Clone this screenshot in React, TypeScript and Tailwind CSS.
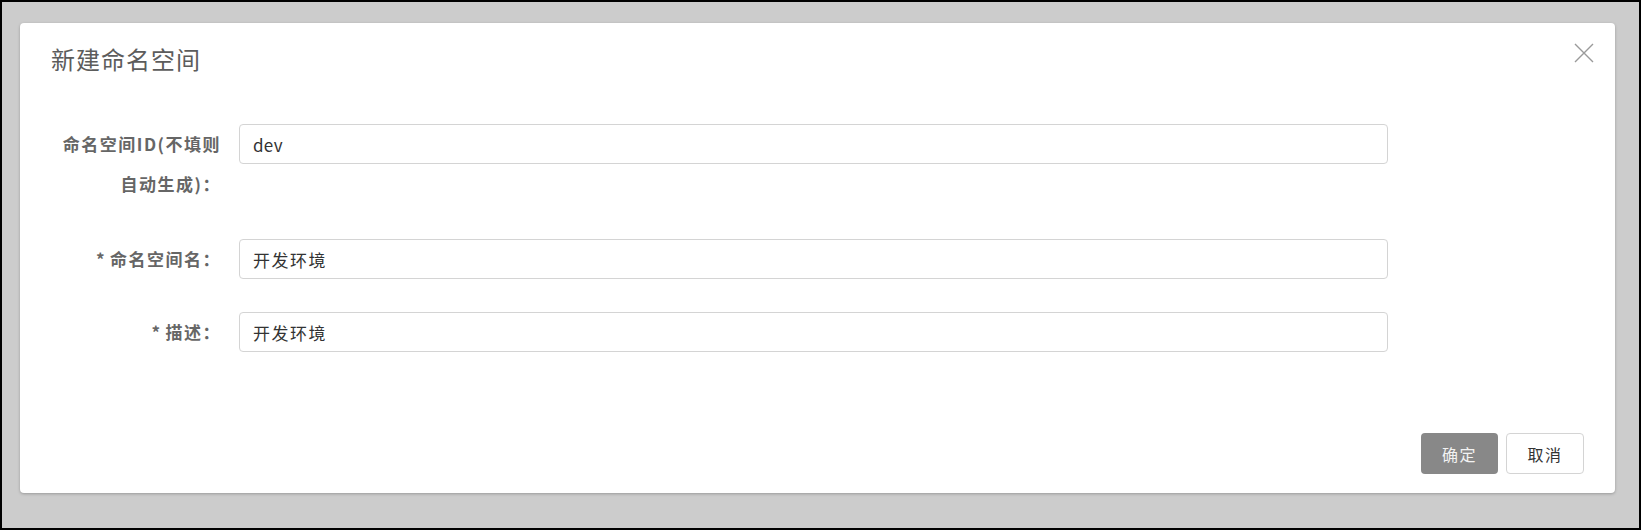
const font = { fontFamily: '"Noto Sans CJK SC", "Noto Sans", sans-serif' };

function Field({ label, value, className = "", latin = false }: { label: React.ReactNode; value: string; className?: string; latin?: boolean }) {
  return (
    <div className={`grid grid-cols-[170px_1149px] gap-x-[18px] items-start ${className}`}>
      <label className="text-right whitespace-nowrap text-[17px] leading-[40px] font-bold text-[#666] tracking-[1.5px]">{label}</label>
      <input
        readOnly
        value={value}
        className={`h-10 w-full rounded border border-[#d4d4d4] bg-white px-[13px] text-[17px] text-[#333] outline-none ${latin ? "tracking-[0.3px]" : "tracking-[1.5px]"}`}
        style={font}
      />
    </div>
  );
}

export default function App() {
  return (
    <div className="w-[1641px] h-[530px] border-2 border-black bg-[#cccccc] pl-[18px] pt-[21px]" style={font}>
      <div className="relative w-[1595px] h-[470px] rounded bg-white shadow-[0_1px_3px_rgba(0,0,0,0.25)] px-[31px] pt-[18px] pb-[19px] flex flex-col">
        <h2 className="text-[24px] leading-[36px] font-normal text-[#5c5c5c] tracking-[1px]">新建命名空间</h2>
        {/* close */}
        <button className="absolute top-[20px] right-[21px] text-[#9a9a9a]">
          <svg width="20" height="20" viewBox="0 0 20 20" fill="none" stroke="currentColor" strokeWidth="1.4">
            <path d="M1 1L19 19M19 1L1 19" />
          </svg>
        </button>

        <div className="mt-[47px]">
          <Field
            className="mb-[35px]"
            label={<>命名空间ID(不填则<br />自动生成)：</>}
            value="dev"
            latin
          />
          <Field
            className="mb-[33px]"
            label={<><span className="mr-1">*</span>命名空间名：</>}
            value="开发环境"
          />
          <Field
            label={<><span className="mr-1">*</span>描述：</>}
            value="开发环境"
          />
        </div>

        <div className="mt-auto flex justify-end gap-2">
          <button className="h-[41px] w-[77px] rounded bg-[#888888] text-[16px] text-[#f2f2f2] tracking-[1.5px]">确定</button>
          <button className="h-[41px] w-[78px] rounded border border-[#d4d4d4] bg-white text-[16px] text-[#333] tracking-[1.5px]">取消</button>
        </div>
      </div>
    </div>
  );
}
